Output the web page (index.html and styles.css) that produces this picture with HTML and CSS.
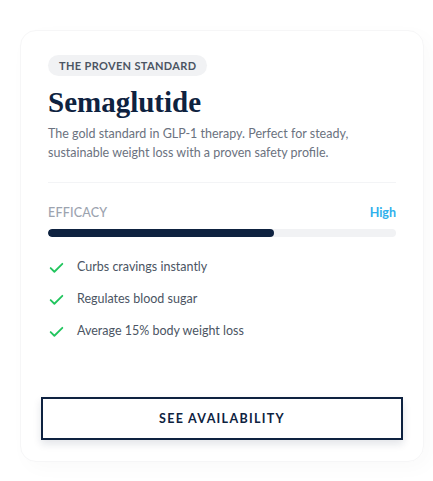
FILE: index.html
```
<!DOCTYPE html>
<html>
<head>
<meta charset="utf-8">
<link rel="stylesheet" href="styles.css">
</head>
<body>
<div class="card">
  <span class="badge">THE PROVEN STANDARD</span>
  <h1 class="title">Semaglutide</h1>
  <p class="desc">The gold standard in GLP-1 therapy. Perfect for steady, sustainable weight loss with a proven safety profile.</p>
  <div class="divider"></div>
  <div class="meter-head">
    <span class="meter-label">EFFICACY</span>
    <span class="meter-value">High</span>
  </div>
  <div class="bar"><div class="bar-fill" style="width:65%"></div></div>
  <ul class="list">
    <li class="item"><svg class="check" viewBox="0 0 16 16"><path d="M2.5 8.5 L6 12 L13.5 4.5"/></svg><span>Curbs cravings instantly</span></li>
    <li class="item"><svg class="check" viewBox="0 0 16 16"><path d="M2.5 8.5 L6 12 L13.5 4.5"/></svg><span>Regulates blood sugar</span></li>
    <li class="item"><svg class="check" viewBox="0 0 16 16"><path d="M2.5 8.5 L6 12 L13.5 4.5"/></svg><span>Average 15% body weight loss</span></li>
  </ul>
  <button class="cta">SEE AVAILABILITY</button>
</div>
</body>
</html>
```
FILE: styles.css
```
* { box-sizing: border-box; }
html, body { margin: 0; padding: 0; background: #ffffff; }
body { font-family: Lato, "Noto Sans", sans-serif; }
.card {
  margin: 30px 9px 19px 20px;
  width: 404px;
  height: 432px;
  border: 1px solid #f6f6f7;
  border-radius: 16px;
  box-shadow: 6px 6px 20px rgba(0,0,0,0.025);
  padding: 24px 27px 21px 27px;
  display: flex;
  flex-direction: column;
  align-items: flex-start;
}
.badge {
  display: inline-block;
  background: #f1f2f4;
  color: #4b5563;
  font-size: 11px;
  line-height: 13px;
  font-weight: 700;
  letter-spacing: 0.35px;
  padding: 4px 11px;
  border-radius: 999px;
}
.title {
  margin: 9px 0 0 0;
  font-family: "Liberation Serif", serif;
  font-weight: 700;
  font-size: 29px;
  line-height: 35px;
  color: #0e2240;
}
.desc {
  margin: 5px 0 0 0;
  font-size: 12.5px;
  line-height: 18.5px;
  color: #6b7280;
}
.divider {
  align-self: stretch;
  height: 1px;
  background: #f3f4f6;
  margin-top: 20px;
}
.meter-head {
  align-self: stretch;
  margin-top: 22px;
  display: flex;
  justify-content: space-between;
  font-size: 12.5px;
  line-height: 16px;
}
.meter-label { color: #9ca3af; font-weight: 500; letter-spacing: 0.2px; }
.meter-value { color: #2fb0ec; font-weight: 700; }
.bar {
  align-self: stretch;
  margin-top: 8px;
  height: 8px;
  border-radius: 999px;
  background: #f1f2f4;
  overflow: hidden;
}
.bar-fill { height: 100%; background: #0e2240; border-radius: 999px; }
.list {
  list-style: none;
  margin: 20px 0 0 0;
  padding: 0;
  display: flex;
  flex-direction: column;
  gap: 12px;
}
.item {
  display: flex;
  align-items: center;
  gap: 12px;
  font-size: 12.5px;
  line-height: 20px;
  color: #4b5563;
}
.check {
  width: 17px;
  height: 17px;
  fill: none;
  stroke: #22c55e;
  stroke-width: 1.7;
  stroke-linecap: round;
  stroke-linejoin: round;
}
.cta {
  margin-top: auto;
  align-self: stretch;
  margin-left: -7px;
  margin-right: -7px;
  height: 43px;
  background: #ffffff;
  border: 2px solid #0e2240;
  color: #0e2240;
  font-family: Lato, "Noto Sans", sans-serif;
  font-size: 12.5px;
  font-weight: 700;
  letter-spacing: 1.3px;
  box-shadow: 0 4px 8px rgba(14,34,64,0.12);
  cursor: pointer;
}
```
